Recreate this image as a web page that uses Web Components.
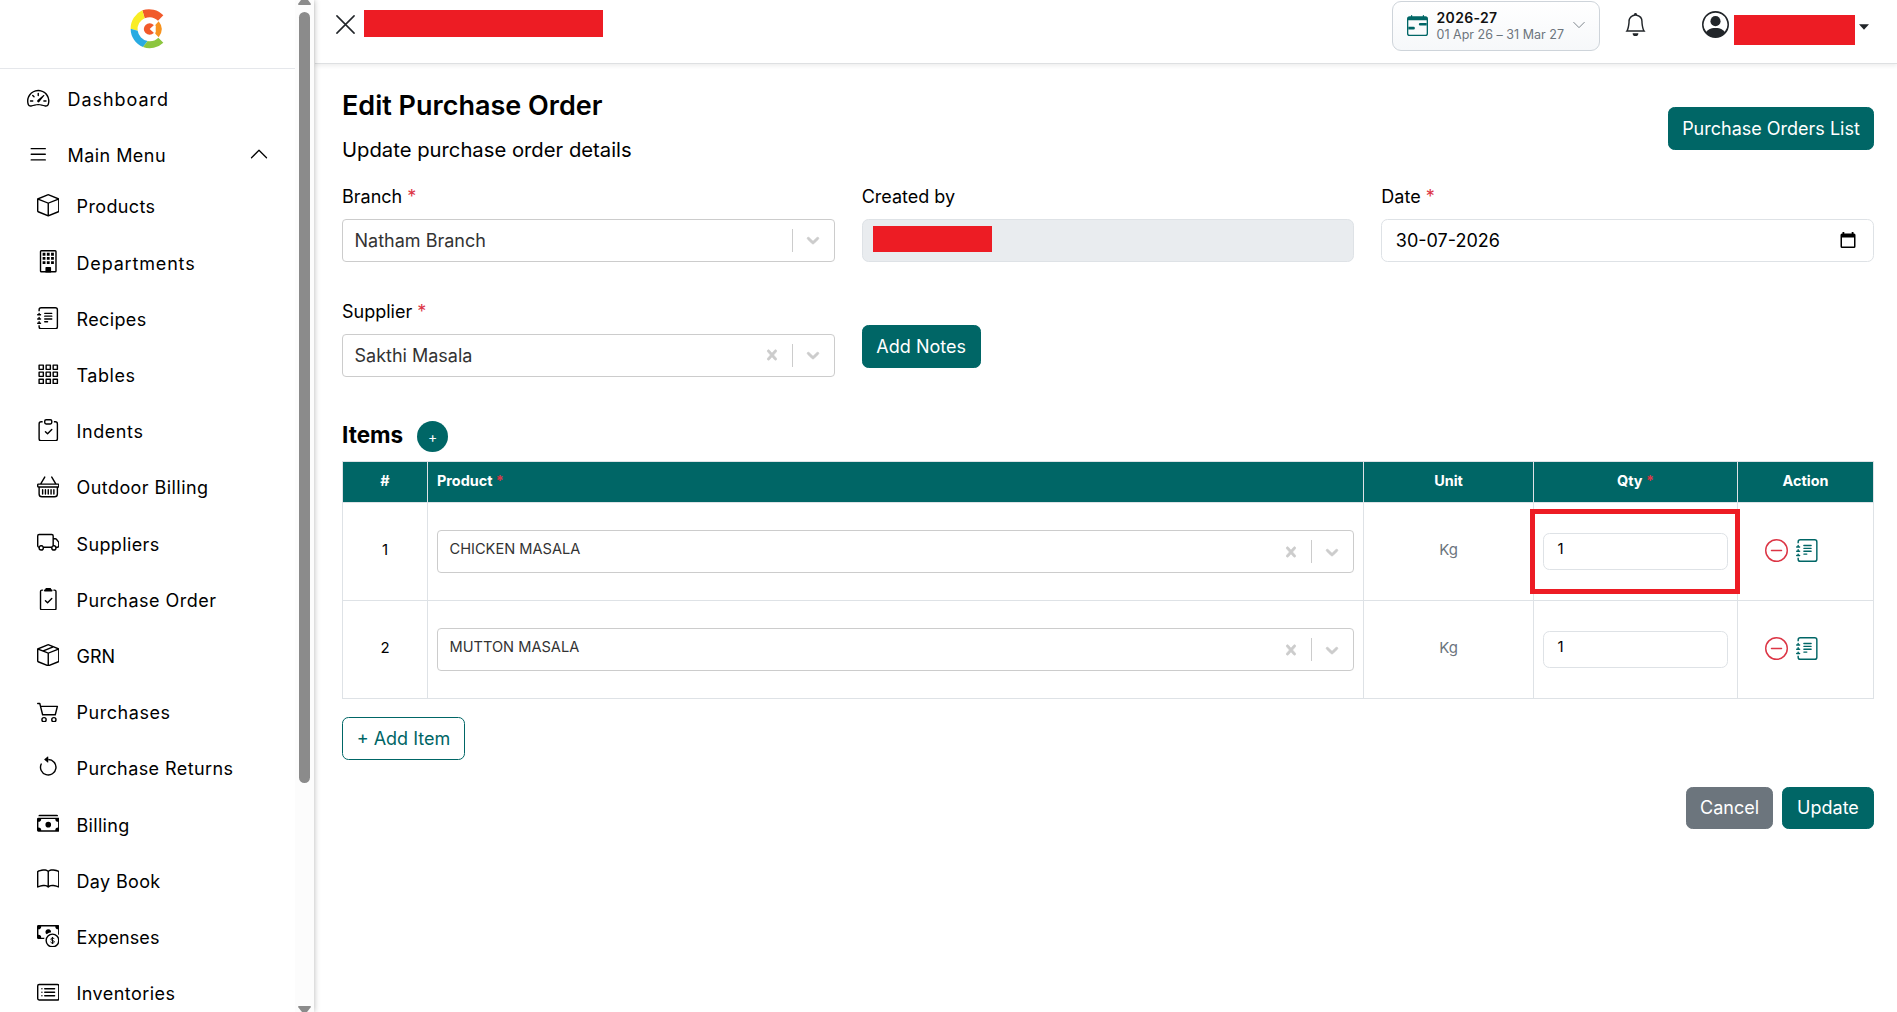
<!DOCTYPE html>
<html lang="en">
<head>
<meta charset="utf-8">
<title>Edit Purchase Order</title>
<style>
    html {
        font-size: 18px;
    }

    body {
        margin: 0;
        height: 1012px;
        overflow: hidden;
        background: #fff;
        color: #000;
        font-family: Inter, "Liberation Sans", sans-serif;
        line-height: 1.5;
    }
</style>
</head>
<body>
<po-app></po-app>

<script>
const ICONS = {
    dashboard: '<path d="M8 4a.5.5 0 0 1 .5.5V6a.5.5 0 0 1-1 0V4.5A.5.5 0 0 1 8 4M3.732 5.732a.5.5 0 0 1 .707 0l.915.914a.5.5 0 1 1-.708.708l-.914-.915a.5.5 0 0 1 0-.707M2 10a.5.5 0 0 1 .5-.5h1.586a.5.5 0 0 1 0 1H2.5A.5.5 0 0 1 2 10m9.5 0a.5.5 0 0 1 .5-.5h1.5a.5.5 0 0 1 0 1H12a.5.5 0 0 1-.5-.5m.754-4.246a.39.39 0 0 0-.527-.02L7.547 9.31a.91.91 0 1 0 1.302 1.258l3.434-4.297a.39.39 0 0 0-.029-.518z"/><path fill-rule="evenodd" d="M0 10a8 8 0 1 1 15.547 2.661c-.442 1.253-1.845 1.602-2.932 1.25C11.309 13.488 9.475 13 8 13c-1.474 0-3.31.488-4.615.911-1.087.352-2.49.003-2.932-1.25A8 8 0 0 1 0 10m8-7a7 7 0 0 0-6.603 9.329c.203.575.923.876 1.68.63C4.397 12.533 6.358 12 8 12s3.604.532 4.923.96c.757.245 1.477-.056 1.68-.631A7 7 0 0 0 8 3"/>',
    list: '<path d="M2.5 12a.5.5 0 0 1 .5-.5h10a.5.5 0 0 1 0 1H3a.5.5 0 0 1-.5-.5m0-4a.5.5 0 0 1 .5-.5h10a.5.5 0 0 1 0 1H3a.5.5 0 0 1-.5-.5m0-4a.5.5 0 0 1 .5-.5h10a.5.5 0 0 1 0 1H3a.5.5 0 0 1-.5-.5"/>',
    box: '<path d="M8.186 1.113a.5.5 0 0 0-.372 0L1.846 3.5 8 5.961 14.154 3.5zM15 4.239l-6.5 2.6v7.922l6.5-2.6V4.24zM7.5 14.762V6.838L1 4.239v7.923zM7.443.184a1.5 1.5 0 0 1 1.114 0l7.129 2.852A.5.5 0 0 1 16 3.5v8.662a1 1 0 0 1-.629.928l-7.185 2.874a.5.5 0 0 1-.372 0L.63 13.09a1 1 0 0 1-.63-.928V3.5a.5.5 0 0 1 .314-.464z"/>',
    building: '<rect x="2.5" y=".5" width="11" height="15" rx=".6" fill="none" stroke="currentColor"/><path d="M4 2h2v2H4zM7 2h2v2H7zM10 2h2v2h-2zM4 5h2v2H4zM7 5h2v2H7zM10 5h2v2h-2zM4 8h2v2H4zM7 8h2v2H7zM10 8h2v2h-2zM6 12.5a.5.5 0 0 1 .5-.5h3a.5.5 0 0 1 .5.5V16H6z"/>',
    journal: '<path d="M5 10.5a.5.5 0 0 1 .5-.5h2a.5.5 0 0 1 0 1h-2a.5.5 0 0 1-.5-.5m0-2a.5.5 0 0 1 .5-.5h5a.5.5 0 0 1 0 1h-5a.5.5 0 0 1-.5-.5m0-2a.5.5 0 0 1 .5-.5h5a.5.5 0 0 1 0 1h-5a.5.5 0 0 1-.5-.5m0-2a.5.5 0 0 1 .5-.5h5a.5.5 0 0 1 0 1h-5a.5.5 0 0 1-.5-.5"/><path d="M3 0h10a2 2 0 0 1 2 2v12a2 2 0 0 1-2 2H3a2 2 0 0 1-2-2v-1h1v1a1 1 0 0 0 1 1h10a1 1 0 0 0 1-1V2a1 1 0 0 0-1-1H3a1 1 0 0 0-1 1v1H1V2a2 2 0 0 1 2-2"/><path d="M1 5v-.5a.5.5 0 0 1 1 0V5h.5a.5.5 0 0 1 0 1h-2a.5.5 0 0 1 0-1zm0 3v-.5a.5.5 0 0 1 1 0V8h.5a.5.5 0 0 1 0 1h-2a.5.5 0 0 1 0-1zm0 3v-.5a.5.5 0 0 1 1 0v.5h.5a.5.5 0 0 1 0 1h-2a.5.5 0 0 1 0-1z"/>',
    grid: '<path fill="none" stroke="currentColor" stroke-linejoin="round" d="M1.5 1.5h3v3h-3zM6.5 1.5h3v3h-3zM11.5 1.5h3v3h-3zM1.5 6.5h3v3h-3zM6.5 6.5h3v3h-3zM11.5 6.5h3v3h-3zM1.5 11.5h3v3h-3zM6.5 11.5h3v3h-3zM11.5 11.5h3v3h-3z"/>',
    clipboard: '<path fill-rule="evenodd" d="M10.854 7.146a.5.5 0 0 1 0 .708l-3 3a.5.5 0 0 1-.708 0l-1.5-1.5a.5.5 0 1 1 .708-.708L7.5 9.793l2.646-2.647a.5.5 0 0 1 .708 0"/><path d="M4 1.5H3a2 2 0 0 0-2 2V14a2 2 0 0 0 2 2h10a2 2 0 0 0 2-2V3.5a2 2 0 0 0-2-2h-1v1h1a1 1 0 0 1 1 1V14a1 1 0 0 1-1 1H3a1 1 0 0 1-1-1V3.5a1 1 0 0 1 1-1h1z"/><path d="M9.5 1a.5.5 0 0 1 .5.5v1a.5.5 0 0 1-.5.5h-3a.5.5 0 0 1-.5-.5v-1a.5.5 0 0 1 .5-.5zm-3-1A1.5 1.5 0 0 0 5 1.5v1A1.5 1.5 0 0 0 6.5 4h3A1.5 1.5 0 0 0 11 2.5v-1A1.5 1.5 0 0 0 9.5 0z"/>',
    clipboard2: '<path d="M9.5 0a.5.5 0 0 1 .5.5.5.5 0 0 0 .5.5.5.5 0 0 1 .5.5V2a.5.5 0 0 1-.5.5h-5A.5.5 0 0 1 5 2v-.5a.5.5 0 0 1 .5-.5.5.5 0 0 0 .5-.5.5.5 0 0 1 .5-.5z"/><path d="M3 2.5a.5.5 0 0 1 .5-.5H4a.5.5 0 0 0 0-1h-.5A1.5 1.5 0 0 0 2 2.5v12A1.5 1.5 0 0 0 3.5 16h9a1.5 1.5 0 0 0 1.5-1.5v-12A1.5 1.5 0 0 0 12.5 1H12a.5.5 0 0 0 0 1h.5a.5.5 0 0 1 .5.5v12a.5.5 0 0 1-.5.5h-9a.5.5 0 0 1-.5-.5z"/><path d="M10.854 7.854a.5.5 0 0 0-.708-.708L7.5 9.793 6.354 8.646a.5.5 0 1 0-.708.708l1.5 1.5a.5.5 0 0 0 .708 0z"/>',
    basket: '<path d="M5.757 1.071a.5.5 0 0 1 .172.686L3.383 6h9.234L10.07 1.757a.5.5 0 1 1 .858-.514L13.783 6H15a1 1 0 0 1 1 1v1a1 1 0 0 1-1 1v4.5a2.5 2.5 0 0 1-2.5 2.5h-9A2.5 2.5 0 0 1 1 13.5V9a1 1 0 0 1-1-1V7a1 1 0 0 1 1-1h1.217L5.07 1.243a.5.5 0 0 1 .686-.172zM2 9v4.5A1.5 1.5 0 0 0 3.5 15h9a1.5 1.5 0 0 0 1.5-1.5V9zM1 7v1h14V7z"/><path fill="none" stroke="currentColor" stroke-linecap="round" d="M4 10.5v3M6 10.5v3M8 10.5v3M10 10.5v3M12 10.5v3"/>',
    truck: '<path d="M0 3.5A1.5 1.5 0 0 1 1.5 2h9A1.5 1.5 0 0 1 12 3.5V5h1.02a1.5 1.5 0 0 1 1.17.563l1.481 1.85a1.5 1.5 0 0 1 .329.938V10.5a1.5 1.5 0 0 1-1.5 1.5H14a2 2 0 1 1-4 0H5a2 2 0 1 1-3.998-.085A1.5 1.5 0 0 1 0 10.5zm1.294 7.456A2 2 0 0 1 4.732 11h5.536a2 2 0 0 1 .732-.732V3.5a.5.5 0 0 0-.5-.5h-9a.5.5 0 0 0-.5.5v7a.5.5 0 0 0 .294.456M12 10a2 2 0 0 1 1.732 1h.768a.5.5 0 0 0 .5-.5V8.35a.5.5 0 0 0-.11-.312l-1.48-1.85A.5.5 0 0 0 13.02 6H12zm-9 1a1 1 0 1 0 0 2 1 1 0 0 0 0-2m9 0a1 1 0 1 0 0 2 1 1 0 0 0 0-2"/>',
    seam: '<path d="M8.186 1.113a.5.5 0 0 0-.372 0L1.846 3.5l2.404.961L10.404 2zm3.564 1.426L5.596 5 8 5.961 14.154 3.5zm3.25 1.7-6.5 2.6v7.922l6.5-2.6V4.24zM7.5 14.762V6.838L1 4.239v7.923zM7.443.184a1.5 1.5 0 0 1 1.114 0l7.129 2.852A.5.5 0 0 1 16 3.5v8.662a1 1 0 0 1-.629.928l-7.185 2.874a.5.5 0 0 1-.372 0L.63 13.09a1 1 0 0 1-.63-.928V3.5a.5.5 0 0 1 .314-.464z"/>',
    cart: '<path d="M0 2.5A.5.5 0 0 1 .5 2H2a.5.5 0 0 1 .485.379L2.89 4H14.5a.5.5 0 0 1 .485.621l-1.5 6A.5.5 0 0 1 13 11H4a.5.5 0 0 1-.485-.379L1.61 3H.5a.5.5 0 0 1-.5-.5M3.14 5l1.25 5h8.22l1.25-5zM5 13a1 1 0 1 0 0 2 1 1 0 0 0 0-2m-2 1a2 2 0 1 1 4 0 2 2 0 0 1-4 0m9-1a1 1 0 1 0 0 2 1 1 0 0 0 0-2m-2 1a2 2 0 1 1 4 0 2 2 0 0 1-4 0"/>',
    undo: '<path fill-rule="evenodd" d="M8 3a5 5 0 1 1-4.546 2.914.5.5 0 0 0-.908-.417A6 6 0 1 0 8 2z"/><path d="M8 4.466V.534a.25.25 0 0 0-.41-.192L5.23 2.308a.25.25 0 0 0 0 .384l2.36 1.966A.25.25 0 0 0 8 4.466"/>',
    cash: '<path d="M1 3a1 1 0 0 1 1-1h12a1 1 0 0 1 1 1zm7 8a2 2 0 1 0 0-4 2 2 0 0 0 0 4"/><path d="M0 5a1 1 0 0 1 1-1h14a1 1 0 0 1 1 1v8a1 1 0 0 1-1 1H1a1 1 0 0 1-1-1zm3 0a2 2 0 0 1-2 2v4a2 2 0 0 1 2 2h10a2 2 0 0 1 2-2V7a2 2 0 0 1-2-2z"/>',
    book: '<path d="M1 2.828c.885-.37 2.154-.769 3.388-.893 1.33-.134 2.458.063 3.112.752v9.746c-.935-.53-2.12-.603-3.213-.493-1.18.12-2.37.461-3.287.811zm7.5-.141c.654-.689 1.782-.886 3.112-.752 1.234.124 2.503.523 3.388.893v9.923c-.918-.35-2.107-.692-3.287-.81-1.094-.111-2.278-.039-3.213.492zM8 1.783C7.015.936 5.587.81 4.287.94c-1.514.153-3.042.672-3.994 1.105A.5.5 0 0 0 0 2.5v11a.5.5 0 0 0 .707.455c.882-.4 2.303-.881 3.68-1.02 1.409-.142 2.59.087 3.223.877a.5.5 0 0 0 .78 0c.633-.79 1.814-1.019 3.222-.877 1.378.139 2.8.62 3.681 1.02A.5.5 0 0 0 16 13.5v-11a.5.5 0 0 0-.293-.455c-.952-.433-2.48-.952-3.994-1.105C10.413.809 8.985.936 8 1.783"/>',
    coin: '<path fill-rule="evenodd" d="M11 15a4 4 0 1 0 0-8 4 4 0 0 0 0 8m5-4a5 5 0 1 1-10 0 5 5 0 0 1 10 0"/><path fill="none" stroke="currentColor" stroke-width=".7" d="M12.2 10c-.1-1.1-2.3-1.1-2.3.1 0 1.3 2.4.6 2.4 1.9 0 1.1-2.5 1.1-2.6-.1M11 8.5v5"/><path d="M1 0a1 1 0 0 0-1 1v8a1 1 0 0 0 1 1h4.083q.088-.517.258-1H3a2 2 0 0 0-2-2V3a2 2 0 0 0 2-2h10a2 2 0 0 0 2 2v3.528c.38.34.717.728 1 1.154V1a1 1 0 0 0-1-1z"/><path d="M9.998 5.083 10 5a2 2 0 1 0-3.132 1.65 6 6 0 0 1 3.13-1.567"/>',
    card: '<path d="M14.5 3a.5.5 0 0 1 .5.5v9a.5.5 0 0 1-.5.5h-13a.5.5 0 0 1-.5-.5v-9a.5.5 0 0 1 .5-.5zm-13-1A1.5 1.5 0 0 0 0 3.5v9A1.5 1.5 0 0 0 1.5 14h13a1.5 1.5 0 0 0 1.5-1.5v-9A1.5 1.5 0 0 0 14.5 2z"/><path fill="none" stroke="currentColor" stroke-linecap="round" d="M5.5 5.5h7M5.5 8h7M5.5 10.5h7M3.5 5.5h0M3.5 8h0M3.5 10.5h0"/>',
    up: '<path fill="none" stroke="currentColor" stroke-linecap="round" stroke-linejoin="round" d="m2 11 6-6 6 6"/>',
    down: '<path fill="none" stroke="currentColor" stroke-linecap="round" stroke-linejoin="round" d="m2 5 6 6 6-6"/>',
    close: '<path fill="none" stroke="currentColor" stroke-linecap="round" d="m2.5 2.5 11 11M13.5 2.5l-11 11"/>',
    range: '<path d="M9 7a1 1 0 0 1 1-1h5v2h-5a1 1 0 0 1-1-1M1 9h4a1 1 0 0 1 0 2H1z"/><path d="M3.5 0a.5.5 0 0 1 .5.5V1h8V.5a.5.5 0 0 1 1 0V1h1a2 2 0 0 1 2 2v11a2 2 0 0 1-2 2H2a2 2 0 0 1-2-2V3a2 2 0 0 1 2-2h1V.5a.5.5 0 0 1 .5-.5M1 4v10a1 1 0 0 0 1 1h12a1 1 0 0 0 1-1V4z"/>',
    bell: '<path d="M8 16a2 2 0 0 0 2-2H6a2 2 0 0 0 2 2M8 1.918l-.797.161A4 4 0 0 0 4 6c0 .628-.134 2.197-.459 3.742-.16.767-.376 1.566-.663 2.258h10.244c-.287-.692-.502-1.49-.663-2.258C12.134 8.197 12 6.628 12 6a4 4 0 0 0-3.203-3.92zM14.22 12c.223.447.481.801.78 1H1c.299-.199.557-.553.78-1C2.68 10.2 3 6.88 3 6c0-2.42 1.72-4.44 4.005-4.901a1 1 0 1 1 1.99 0A5 5 0 0 1 13 6c0 .88.32 4.2 1.22 6"/>',
    person: '<path d="M11 6a3 3 0 1 1-6 0 3 3 0 0 1 6 0"/><path fill-rule="evenodd" d="M0 8a8 8 0 1 1 16 0A8 8 0 0 1 0 8m8-7a7 7 0 0 0-5.468 11.37C3.242 11.226 4.805 10 8 10s4.757 1.225 5.468 2.37A7 7 0 0 0 8 1"/>',
    caret: '<path d="M0 3.5h16l-8 9z"/>',
    minus: '<circle cx="8" cy="8" r="7.5" fill="none" stroke="currentColor"/><path fill="none" stroke="currentColor" stroke-linecap="round" d="M4.5 8h7"/>',
    date: '<path d="M2.5 0h1.8v1.5h7.4V0h1.8v1.5h.5A1.5 1.5 0 0 1 15.5 3v11.5A1.5 1.5 0 0 1 14 16H2A1.5 1.5 0 0 1 .5 14.5V3A1.5 1.5 0 0 1 2 1.5h.5zM2 5.5v9h12v-9z"/>'
};

function define(name, html, setup) {
    const template = document.createElement('template');
    template.innerHTML = html;

    customElements.define(name, class extends HTMLElement {
        constructor() {
            super();
            this.attachShadow({ mode: 'open' });
            this.shadowRoot.appendChild(template.content.cloneNode(true));
        }

        connectedCallback() {
            if (setup) setup(this, this.shadowRoot);
        }
    });
}

define('po-icon', `
    <style>
        :host { display: block; flex: none; width: 22.5px; height: 22.5px; }
        svg { display: block; width: 100%; height: 100%; }
    </style>
    <svg viewBox="0 0 16 16" fill="currentColor"></svg>
`, (el, root) => {
    root.querySelector('svg').innerHTML = ICONS[el.getAttribute('name')];
});

// Spreads its letters so that the text takes the given width
define('fit-text', `
    <style>
        :host { display: inline-block; white-space: nowrap; }
    </style>
    <slot></slot>
`, (el) => {
    const natural = el.getBoundingClientRect().width;
    const spacing = (Number(el.getAttribute('width')) - natural) / el.textContent.length;
    el.style.letterSpacing = spacing.toFixed(3) + 'px';
});

define('brand-logo', `
    <style>
        :host { display: block; width: 35px; height: 40px; }
        svg { display: block; }
    </style>
    <svg width="35" height="40" viewBox="390 25 105 120">
        <path fill="#f15a2b" d="M427 29A59 59 0 0 1 490 44L474 60A37 37 0 0 0 434 53z"/>
        <path fill="#f9ed25" d="M427 29A59 59 0 0 0 392 84L413 90A37 37 0 0 1 434 53z"/>
        <path fill="#29abe2" d="M392 84A59 59 0 0 0 429 139L443 121A37 37 0 0 1 413 90z"/>
        <path fill="#8cc63f" d="M429 139A59 59 0 0 0 490 126L475 111A37 37 0 0 1 443 121z"/>
        <path fill="#f7931e" d="M476 62Q495 85 476 110L466 99V73z"/>
        <circle cx="449" cy="85" r="17.5" fill="#f15a2b"/>
        <path fill="#fff" d="M449 85l13-12 5 2v20l-5 2z"/>
    </svg>
`);

define('nav-item', `
    <style>
        :host {
            display: flex;
            align-items: center;
            height: 56.2px;
            padding: 0 26px 0 36.5px;
            font-size: 18px;
            line-height: 26px;
        }
        :host([top]) { padding-left: 27px; }
        .label { margin-left: 17.5px; padding-top: 4px; }
        :host([top]) .label { margin-left: 18px; padding-top: 3px; }
        .arrow { margin-left: auto; width: 20px; height: 20px; }
    </style>
    <po-icon></po-icon>
    <fit-text class="label"></fit-text>
`, (el, root) => {
    root.querySelector('po-icon').shadowRoot.querySelector('svg').innerHTML = ICONS[el.getAttribute('icon')];
    if (el.hasAttribute('open')) {
        const arrow = document.createElement('po-icon');
        arrow.className = 'arrow';
        arrow.setAttribute('name', 'up');
        root.appendChild(arrow);
    }
    const label = document.createElement('fit-text');
    label.className = 'label';
    label.setAttribute('width', el.getAttribute('width'));
    label.textContent = el.getAttribute('label');
    root.querySelector('fit-text').replaceWith(label);
});

const MENU = [
    ['box', 'Products', 79], ['building', 'Departments', 119], ['journal', 'Recipes', 70],
    ['grid', 'Tables', 59], ['clipboard', 'Indents', 67], ['basket', 'Outdoor Billing', 132],
    ['truck', 'Suppliers', 83], ['clipboard2', 'Purchase Order', 140], ['seam', 'GRN', 38.5],
    ['cart', 'Purchases', 94], ['undo', 'Purchase Returns', 157], ['cash', 'Billing', 53],
    ['book', 'Day Book', 84], ['coin', 'Expenses', 83], ['card', 'Inventories', 99]
];

define('side-bar', `
    <style>
        :host {
            display: flex;
            flex: none;
            width: 314px;
            height: 1012px;
            overflow: hidden;
            box-shadow: 0 0 6px rgba(0, 0, 0, 0.3);
            z-index: 2;
        }
        .menu { width: 295px; }
        .logo {
            display: flex;
            justify-content: center;
            box-sizing: border-box;
            height: 69px;
            padding: 8.5px 0 0 0;
            border-bottom: 1px solid #e5e7eb;
        }
        brand-logo { margin-left: -1px; }
        .top { padding-top: 1px; }
        .sub { margin-top: -5px; }
        .bar {
            display: flex;
            flex-direction: column;
            align-items: center;
            width: 19px;
            background: #fcfcfc;
        }
        .bar svg { display: block; }
        .thumb {
            width: 11px;
            height: 771px;
            margin: 7px 0 auto;
            border-radius: 6px;
            background: #8b8b8b;
        }
    </style>
    <div class="menu">
        <div class="logo"><brand-logo></brand-logo></div>
        <div class="top">
            <nav-item top icon="dashboard" label="Dashboard" width="101.5"></nav-item>
            <nav-item top open icon="list" label="Main Menu" width="98.5"></nav-item>
        </div>
        <div class="sub"></div>
    </div>
    <div class="bar">
        <svg width="13" height="5"><path fill="#8b8b8b" d="M3 0h7l3 4q0 1-1 1H1q-1 0-1-1z"/></svg>
        <div class="thumb"></div>
        <svg width="13" height="6"><path fill="#8b8b8b" d="M1 0h11q1 0 1 1L9 6H4L0 1q0-1 1-1z"/></svg>
    </div>
`, (el, root) => {
    root.querySelector('.sub').innerHTML = MENU.map(([icon, label, width]) =>
        `<nav-item icon="${icon}" label="${label}" width="${width}"></nav-item>`).join('');
});

// Solid block over private text
define('red-block', `
    <style>
        :host { display: block; flex: none; background: #ed1c24; }
    </style>
`);

define('top-bar', `
    <style>
        :host {
            display: flex;
            align-items: flex-start;
            box-sizing: border-box;
            height: 64px;
            padding-left: 18px;
            border-bottom: 1px solid #dee0e2;
            box-shadow: 0 2px 4px rgba(0, 0, 0, 0.07);
            color: #212529;
        }
        .close { width: 25px; height: 25px; margin-top: 12px; }
        .name { width: 239px; height: 27px; margin: 10px 0 0 6px; }
        .year {
            display: flex;
            align-items: center;
            box-sizing: border-box;
            width: 208px;
            height: 50px;
            margin: 1px 0 0 auto;
            padding: 0 13px 0 14px;
            border: 1px solid #ced4da;
            border-radius: 9px;
            background: linear-gradient(#fff, #f6f8fa);
        }
        .year .cal { width: 21px; height: 21px; margin-top: -2px; color: #006666; }
        .text { flex: 1; margin: 0 0 0 8.5px; line-height: 17px; font-size: 12.5px; color: #6c757d; }
        .text b { display: block; font-size: 14px; font-weight: 600; color: #111; }
        .year .arrow { width: 14px; height: 14px; margin-top: -2px; color: #6c757d; }
        .bell { width: 23px; height: 23px; margin: 13px 0 0 24px; }
        .person { width: 27px; height: 27px; margin: 11px 0 0 55px; }
        .user { width: 121px; height: 30px; margin: 15px 0 0 5px; }
        .caret { width: 10px; height: 10px; margin: 22px 28px 0 4px; }
    </style>
    <po-icon class="close" name="close"></po-icon>
    <red-block class="name"></red-block>
    <div class="year">
        <po-icon class="cal" name="range"></po-icon>
        <div class="text">
            <b><fit-text width="61">2026-27</fit-text></b>
            <fit-text width="127.5">01 Apr 26 – 31 Mar 27</fit-text>
        </div>
        <po-icon class="arrow" name="down"></po-icon>
    </div>
    <po-icon class="bell" name="bell"></po-icon>
    <po-icon class="person" name="person"></po-icon>
    <red-block class="user"></red-block>
    <po-icon class="caret" name="caret"></po-icon>
`);

define('po-button', `
    <style>
        :host {
            display: inline-block;
            box-sizing: border-box;
            height: 42.5px;
            padding: 6.75px 0;
            border: 1px solid #006666;
            border-radius: 6.5px;
            background: #006666;
            color: #fff;
            font-size: 18px;
            line-height: 27px;
            text-align: center;
            white-space: nowrap;
        }
        :host([kind="outline"]) { background: #fff; color: #006666; }
        :host([kind="secondary"]) { background: #6c757d; border-color: #6c757d; }
    </style>
    <slot></slot>
`);

define('select-box', `
    <style>
        :host {
            display: flex;
            align-items: center;
            box-sizing: border-box;
            height: 42.5px;
            padding-right: 1px;
            border: 1px solid #ccc;
            border-radius: 4px;
            background: #fff;
            color: #333;
        }
        .value { flex: 1; padding-left: 11.5px; }
        .clear { display: none; }
        :host([clearable]) .clear { display: block; }
        svg { display: block; margin: 0 10px; fill: #ccc; stroke: #ccc; stroke-width: 0.7; }
        .line { width: 1px; height: 23px; background: #ccc; }
    </style>
    <div class="value"><slot></slot></div>
    <svg class="clear" width="20" height="20" viewBox="0 0 20 20"><path d="M14.348 14.849c-0.469 0.469-1.229 0.469-1.697 0l-2.651-3.030-2.651 3.029c-0.469 0.469-1.229 0.469-1.697 0-0.469-0.469-0.469-1.229 0-1.697l2.758-3.150-2.759-3.152c-0.469-0.469-0.469-1.228 0-1.697s1.228-0.469 1.697 0l2.652 3.031 2.651-3.031c0.469-0.469 1.228-0.469 1.697 0s0.469 1.229 0 1.697l-2.758 3.152 2.758 3.150c0.469 0.469 0.469 1.229 0 1.698z"/></svg>
    <div class="line"></div>
    <svg width="20" height="20" viewBox="0 0 20 20"><path d="M4.516 7.548c0.436-0.446 1.043-0.481 1.576 0l3.908 3.747 3.908-3.747c0.533-0.481 1.141-0.446 1.574 0 0.436 0.445 0.408 1.197 0 1.615-0.406 0.418-4.695 4.502-4.695 4.502-0.217 0.223-0.502 0.335-0.787 0.335s-0.570-0.112-0.789-0.335c0 0-4.287-4.084-4.695-4.502s-0.436-1.170 0-1.615z"/></svg>
`);

define('text-box', `
    <style>
        :host {
            display: flex;
            align-items: center;
            justify-content: space-between;
            box-sizing: border-box;
            height: 42.5px;
            padding: 0 13.5px;
            border: 1px solid #dee2e6;
            border-radius: 6.5px;
            background: #fff;
        }
        :host([disabled]) { background: #e9ecef; padding-left: 10px; }
    </style>
    <slot></slot>
`);

define('form-field', `
    <style>
        :host { display: block; }
        .label { height: 27px; margin-bottom: 9px; }
        .star { display: none; color: #dc3545; }
        :host([required]) .star { display: inline; }
    </style>
    <div class="label"><slot name="label"></slot><span class="star"> *</span></div>
    <slot></slot>
`);

define('item-row', `
    <style>
        :host {
            display: grid;
            grid-template-columns: 85px 936px 170px 204px 136px;
            height: 98px;
            border-bottom: 1px solid #dee2e6;
            box-sizing: border-box;
            font-size: 15px;
        }
        .cell {
            display: flex;
            align-items: center;
            justify-content: center;
            padding: 0 9px;
            border-right: 1px solid #dee2e6;
            position: relative;
        }
        .unit { color: #6c757d; }
        select-box { flex: 1; }
        select-box span { display: block; padding-bottom: 3px; font-size: 14.6px; }
        .num { padding-bottom: 3px; }
        text-box { flex: 1; height: 37px; margin-bottom: 1px; }
        .actions { justify-content: flex-start; gap: 8px; padding: 0 0 2px 27px; }
        .actions po-icon { width: 23px; height: 23px; }
        .remove { color: #dc3545; }
        .note { color: #006666; }
        .mark {
            display: none;
            position: absolute;
            inset: 6px -3px 6px -4px;
            border: 5px solid #ed1c24;
        }
        :host([marked]) .mark { display: block; }
    </style>
    <div class="cell"><span class="num"><slot name="index"></slot></span></div>
    <div class="cell"><select-box clearable><span><slot name="product"></slot></span></select-box></div>
    <div class="cell unit"><span class="num">Kg</span></div>
    <div class="cell"><text-box><span class="num">1</span></text-box><div class="mark"></div></div>
    <div class="cell actions">
        <po-icon class="remove" name="minus"></po-icon>
        <po-icon class="note" name="journal"></po-icon>
    </div>
`);

define('items-table', `
    <style>
        :host {
            display: block;
            border: 1px solid #dee2e6;
            border-width: 1px 0 0 1px;
        }
        .head {
            display: grid;
            grid-template-columns: 85px 936px 170px 204px 136px;
            height: 41px;
            box-sizing: border-box;
            border-bottom: 1px solid #dee2e6;
            background: #006666;
            color: #fff;
            font-size: 14.4px;
            font-weight: 700;
            line-height: 37px;
            text-align: center;
        }
        .head div { border-right: 1px solid #dee2e6; }
        .head .left { text-align: left; padding-left: 9px; }
        i { font-style: normal; color: #dc3545; }
    </style>
    <div class="head">
        <div>#</div>
        <div class="left">Product <i>*</i></div>
        <div>Unit</div>
        <div>Qty <i>*</i></div>
        <div>Action</div>
    </div>
    <slot></slot>
`);

define('order-form', `
    <style>
        :host { display: block; padding: 25px 23px 0 27px; }
        .head { display: flex; justify-content: space-between; align-items: flex-start; }
        .head po-button { width: 206px; margin-top: 18px; }
        h1 { margin: 0; font-size: 27px; font-weight: 600; line-height: 34px; }
        .sub { margin-top: 12px; font-size: 20.25px; line-height: 30px; }
        .fields {
            display: grid;
            grid-template-columns: repeat(3, 1fr);
            gap: 36.5px 27px;
            margin-top: 18px;
        }
        .notes { padding-top: 27px; }
        .notes po-button { width: 119px; }
        .blank { width: 119px; height: 26px; margin-bottom: 3px; }
        .date { width: 16px; height: 16px; margin-right: 3px; }
        .items { display: flex; align-items: flex-start; margin-top: 39.5px; }
        h2 { margin: 1px 0 0; font-size: 22.5px; font-weight: 700; line-height: 36px; }
        .plus {
            width: 31px;
            height: 31px;
            margin: 5px 0 0 14px;
            border-radius: 50%;
            background: #006666;
            color: #fff;
            font-size: 14px;
            line-height: 32px;
            text-align: center;
        }
        items-table { margin-top: 8px; }
        .add { width: 123px; margin-top: 18px; }
        .foot { display: flex; justify-content: flex-end; gap: 9px; margin-top: 27px; }
        .foot po-button { width: 92px; }
        .foot po-button[kind] { width: 87px; }
    </style>
    <div class="head">
        <div>
            <h1>Edit Purchase Order</h1>
            <div class="sub">Update purchase order details</div>
        </div>
        <po-button>Purchase Orders List</po-button>
    </div>
    <div class="fields">
        <form-field required>
            <span slot="label">Branch</span>
            <select-box>Natham Branch</select-box>
        </form-field>
        <form-field>
            <span slot="label">Created by</span>
            <text-box disabled><red-block class="blank"></red-block></text-box>
        </form-field>
        <form-field required>
            <span slot="label">Date</span>
            <text-box>30-07-2026<po-icon class="date" name="date"></po-icon></text-box>
        </form-field>
        <form-field required>
            <span slot="label">Supplier</span>
            <select-box clearable>Sakthi Masala</select-box>
        </form-field>
        <div class="notes"><po-button>Add Notes</po-button></div>
    </div>
    <div class="items">
        <h2>Items</h2>
        <div class="plus">+</div>
    </div>
    <items-table>
        <item-row marked><span slot="index">1</span><span slot="product">CHICKEN MASALA</span></item-row>
        <item-row><span slot="index">2</span><span slot="product">MUTTON MASALA</span></item-row>
    </items-table>
    <po-button class="add" kind="outline">+ Add Item</po-button>
    <div class="foot">
        <po-button kind="secondary">Cancel</po-button>
        <po-button>Update</po-button>
    </div>
`);

define('po-app', `
    <style>
        :host { display: flex; height: 1012px; }
        main { flex: 1; margin-left: 1px; }
    </style>
    <side-bar></side-bar>
    <main>
        <top-bar></top-bar>
        <order-form></order-form>
    </main>
`);
</script>
</body>
</html>
